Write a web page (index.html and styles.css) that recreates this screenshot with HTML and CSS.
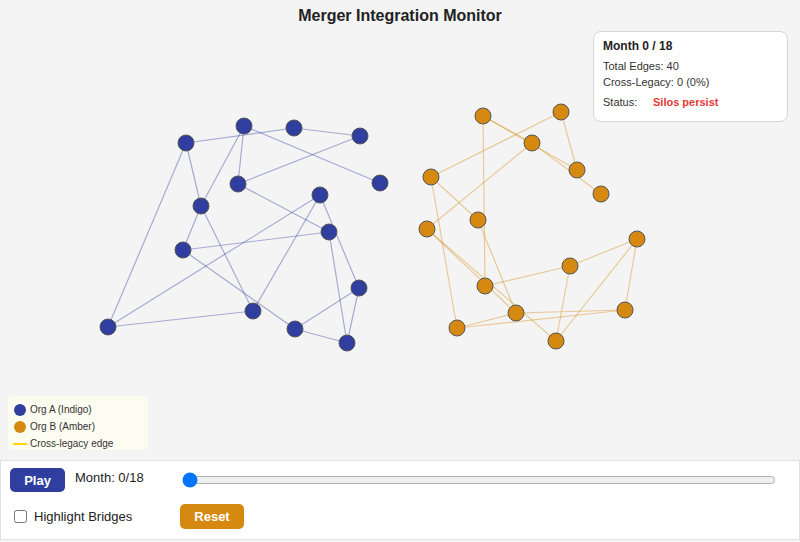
FILE: index.html
```html
<!DOCTYPE html>
<html>
<head>
<meta charset="utf-8">
<link rel="stylesheet" href="styles.css">
</head>
<body>
<div class="app">
  <h1 class="title">Merger Integration Monitor</h1>
  <div class="stage">
    <svg class="graph" viewBox="0 30 800 430" width="800" height="430">
      <g class="edges-a">
        <line x1="186" y1="143" x2="294" y2="128"/>
        <line x1="294" y1="128" x2="360" y2="136"/>
        <line x1="244" y1="126" x2="380" y2="183"/>
        <line x1="360" y1="136" x2="238" y2="184"/>
        <line x1="244" y1="126" x2="238" y2="184"/>
        <line x1="244" y1="126" x2="201" y2="206"/>
        <line x1="186" y1="143" x2="201" y2="206"/>
        <line x1="186" y1="143" x2="108" y2="327"/>
        <line x1="238" y1="184" x2="329" y2="232"/>
        <line x1="201" y1="206" x2="183" y2="250"/>
        <line x1="201" y1="206" x2="253" y2="311"/>
        <line x1="183" y1="250" x2="329" y2="232"/>
        <line x1="183" y1="250" x2="295" y2="329"/>
        <line x1="320" y1="195" x2="108" y2="327"/>
        <line x1="320" y1="195" x2="253" y2="311"/>
        <line x1="320" y1="195" x2="359" y2="288"/>
        <line x1="329" y1="232" x2="347" y2="343"/>
        <line x1="359" y1="288" x2="295" y2="329"/>
        <line x1="359" y1="288" x2="347" y2="343"/>
        <line x1="295" y1="329" x2="347" y2="343"/>
        <line x1="108" y1="327" x2="253" y2="311"/>
      </g>
      <g class="edges-b">
        <line x1="483" y1="116" x2="532" y2="143"/>
        <line x1="483" y1="116" x2="577" y2="170"/>
        <line x1="532" y1="143" x2="601" y2="194"/>
        <line x1="561" y1="112" x2="577" y2="170"/>
        <line x1="561" y1="112" x2="431" y2="177"/>
        <line x1="532" y1="143" x2="427" y2="229"/>
        <line x1="483" y1="116" x2="485" y2="286"/>
        <line x1="431" y1="177" x2="478" y2="220"/>
        <line x1="431" y1="177" x2="457" y2="328"/>
        <line x1="427" y1="229" x2="516" y2="313"/>
        <line x1="427" y1="229" x2="556" y2="341"/>
        <line x1="478" y1="220" x2="516" y2="313"/>
        <line x1="485" y1="286" x2="570" y2="266"/>
        <line x1="570" y1="266" x2="637" y2="239"/>
        <line x1="637" y1="239" x2="625" y2="310"/>
        <line x1="637" y1="239" x2="556" y2="341"/>
        <line x1="570" y1="266" x2="556" y2="341"/>
        <line x1="516" y1="313" x2="457" y2="328"/>
        <line x1="457" y1="328" x2="625" y2="310"/>
        <line x1="516" y1="313" x2="625" y2="310"/>
      </g>
      <g class="nodes-a">
        <circle cx="186" cy="143" r="8"/>
        <circle cx="244" cy="126" r="8"/>
        <circle cx="294" cy="128" r="8"/>
        <circle cx="360" cy="136" r="8"/>
        <circle cx="380" cy="183" r="8"/>
        <circle cx="238" cy="184" r="8"/>
        <circle cx="201" cy="206" r="8"/>
        <circle cx="320" cy="195" r="8"/>
        <circle cx="329" cy="232" r="8"/>
        <circle cx="183" cy="250" r="8"/>
        <circle cx="359" cy="288" r="8"/>
        <circle cx="253" cy="311" r="8"/>
        <circle cx="295" cy="329" r="8"/>
        <circle cx="347" cy="343" r="8"/>
        <circle cx="108" cy="327" r="8"/>
      </g>
      <g class="nodes-b">
        <circle cx="483" cy="116" r="8"/>
        <circle cx="561" cy="112" r="8"/>
        <circle cx="532" cy="143" r="8"/>
        <circle cx="577" cy="170" r="8"/>
        <circle cx="601" cy="194" r="8"/>
        <circle cx="431" cy="177" r="8"/>
        <circle cx="478" cy="220" r="8"/>
        <circle cx="427" cy="229" r="8"/>
        <circle cx="637" cy="239" r="8"/>
        <circle cx="570" cy="266" r="8"/>
        <circle cx="485" cy="286" r="8"/>
        <circle cx="516" cy="313" r="8"/>
        <circle cx="625" cy="310" r="8"/>
        <circle cx="457" cy="328" r="8"/>
        <circle cx="556" cy="341" r="8"/>
      </g>
    </svg>
    <div class="legend">
      <div class="legend-item"><span class="dot dot-a"></span>Org A (Indigo)</div>
      <div class="legend-item"><span class="dot dot-b"></span>Org B (Amber)</div>
      <div class="legend-item"><span class="bar"></span>Cross-legacy edge</div>
    </div>
  </div>
  <div class="info">
    <div class="info-title">Month 0 / 18</div>
    <div class="info-line">Total Edges: 40</div>
    <div class="info-line">Cross-Legacy: 0 (0%)</div>
    <div class="info-status"><span class="status-label">Status:</span><span class="status-value">Silos persist</span></div>
  </div>
  <div class="controls">
    <button class="btn btn-play">Play</button>
    <span class="month">Month: 0/18</span>
    <input class="slider" type="range" min="0" max="18" value="0">
    <label class="check"><input type="checkbox">Highlight Bridges</label>
    <button class="btn btn-reset">Reset</button>
  </div>
</div>
</body>
</html>
```
FILE: styles.css
```css
html, body {
  margin: 0;
  padding: 0;
  background: #f4f4f4;
  font-family: "Liberation Sans", Arial, sans-serif;
  color: #222;
}
.app {
  position: relative;
  width: 800px;
  height: 542px;
  display: flex;
  flex-direction: column;
}
.title {
  margin: 0;
  height: 30px;
  line-height: 31px;
  font-size: 16px;
  font-weight: bold;
  text-align: center;
  color: #222;
}
.stage {
  position: relative;
  height: 430px;
}
.graph {
  display: block;
}
.edges-a line {
  stroke: #303f9f;
  stroke-opacity: 0.4;
  stroke-width: 1.2;
}
.edges-b line {
  stroke: #d68910;
  stroke-opacity: 0.4;
  stroke-width: 1.2;
}
.nodes-a circle {
  fill: #303f9f;
  stroke: #555;
  stroke-width: 1;
}
.nodes-b circle {
  fill: #d68910;
  stroke: #555;
  stroke-width: 1;
}
.legend {
  position: absolute;
  left: 8px;
  bottom: 10px;
  width: 140px;
  height: 54px;
  box-sizing: border-box;
  padding: 5px 6px 0;
  background: #fdfcf0;
  border-radius: 5px;
  font-size: 10px;
  color: #333;
}
.legend-item {
  display: flex;
  align-items: center;
  height: 17px;
}
.dot {
  width: 12px;
  height: 12px;
  border-radius: 50%;
  margin-right: 4px;
}
.dot-a { background: #303f9f; }
.dot-b { background: #d68910; }
.bar {
  width: 14px;
  height: 2px;
  background: #ffd400;
  margin-left: -1px;
  margin-right: 3px;
}
.info {
  position: absolute;
  top: 31px;
  right: 12px;
  width: 195px;
  height: 91px;
  box-sizing: border-box;
  padding: 7px 9px;
  background: #fff;
  border: 1px solid #d6d6d6;
  border-radius: 8px;
  font-size: 11px;
  color: #333;
}
.info-title {
  font-size: 12px;
  font-weight: bold;
  color: #222;
  line-height: 14px;
  margin-bottom: 5px;
}
.info-line {
  line-height: 16px;
}
.info-status {
  display: flex;
  line-height: 16px;
  margin-top: 4px;
}
.status-label {
  width: 50px;
}
.status-value {
  color: #e53935;
  font-weight: bold;
}
.controls {
  height: 80px;
  box-sizing: border-box;
  background: #fff;
  border: 1px solid #e2e2e2;
  display: grid;
  grid-template-columns: 55px 95px 1fr;
  grid-template-rows: 24px 25px;
  column-gap: 10px;
  row-gap: 12px;
  padding: 7px 9px;
  align-items: center;
}
.btn {
  border: none;
  border-radius: 5px;
  color: #fff;
  font-family: "Liberation Sans", Arial, sans-serif;
  font-size: 13px;
  font-weight: bold;
  padding: 0;
  height: 100%;
}
.btn-play {
  background: #303f9f;
  width: 55px;
}
.month {
  font-size: 13px;
  align-self: start;
  margin-top: 2px;
  color: #222;
}
.slider {
  width: 594px;
  margin: 2px;
}
.check {
  grid-column: 1 / 3;
  display: flex;
  align-items: center;
  font-size: 13px;
  color: #222;
}
.check input {
  margin: 3px 7px 3px 4px;
}
.btn-reset {
  background: #d68910;
  width: 64px;
}
```
